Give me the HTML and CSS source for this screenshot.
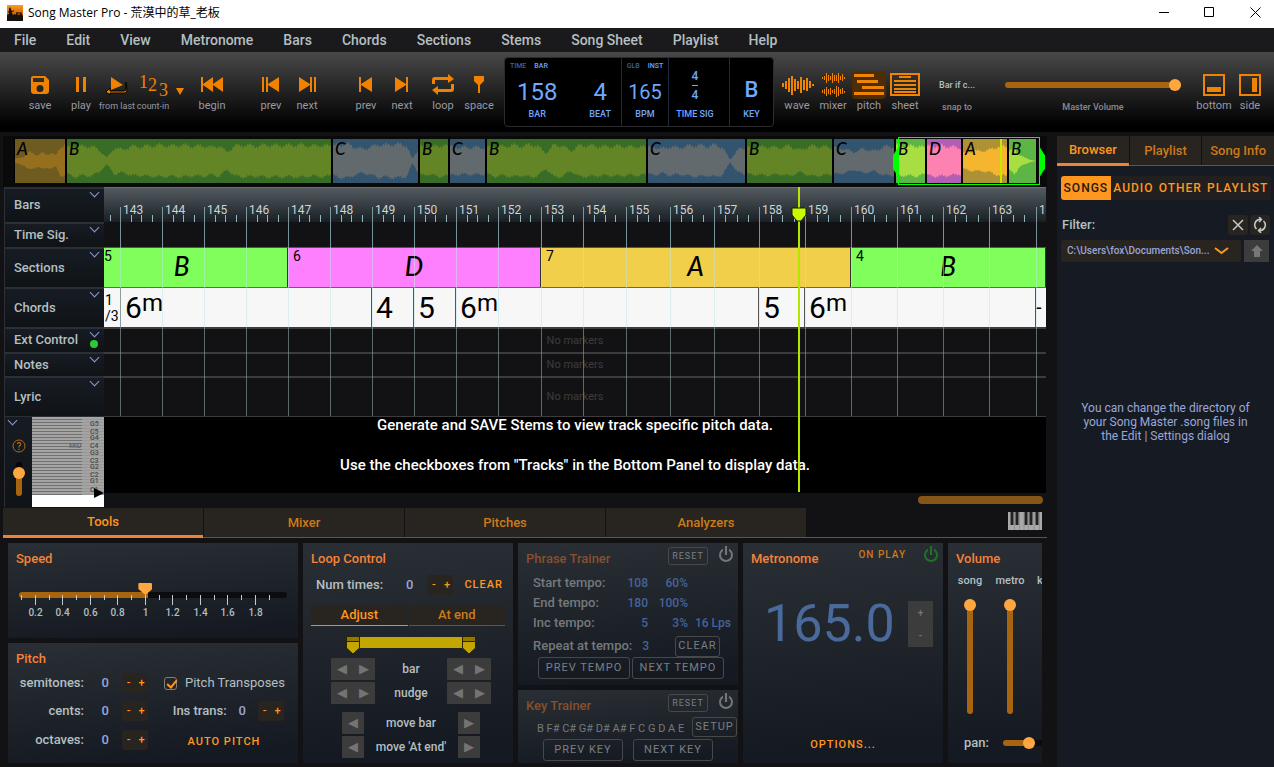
FILE: index.html
```html
<!DOCTYPE html>
<html lang="en">
<head>
    <meta charset="UTF-8">
    <meta name="viewport" content="width=device-width, initial-scale=1.0">
    <title>Song Master Pro</title>
    <link rel="stylesheet" href="styles.css">
</head>
<body>
    <header class="titlebar">
        <svg class="app-icon" viewBox="0 0 16 16">
            <defs><linearGradient id="sunset" x1="0" y1="0" x2="0" y2="1"><stop offset="0" stop-color="#ff9a1f"/><stop offset="1" stop-color="#a33c00"/></linearGradient></defs>
            <rect width="16" height="16" fill="url(#sunset)"/>
            <path d="M0 16V10l2-1 0-5 1-2 1 2 1 4 1 2 2-1 1 1 1-3 1 3 1 0 2-2 2 3v6z" fill="#16110c"/>
            <path d="M1 7l6-1M9 8h6" stroke="#16110c"/>
        </svg>
        <h1>Song Master Pro - 荒漠中的草_老板</h1>
        <div class="window-buttons">
            <button aria-label="Minimize"><svg width="11" height="11" viewBox="0 0 11 11"><path d="M0 5.5h10" stroke="#000"/></svg></button>
            <button aria-label="Maximize"><svg width="11" height="11" viewBox="0 0 11 11"><path d="M.5.5h9v9h-9z" stroke="#000" fill="none"/></svg></button>
            <button aria-label="Close"><svg width="11" height="11" viewBox="0 0 11 11"><path d="M.5.5l10 10M10.500.5l-10 10" stroke="#000"/></svg></button>
        </div>
    </header>
    <nav class="menubar">
        <a href="#">File</a><a href="#">Edit</a><a href="#">View</a><a href="#">Metronome</a><a href="#">Bars</a><a href="#">Chords</a><a href="#">Sections</a><a href="#">Stems</a><a href="#">Song Sheet</a><a href="#">Playlist</a><a href="#">Help</a>
    </nav>

    <div class="toolbar">
        <div class="group">
            <button class="tool"><svg viewBox="0 0 34 28"><path fill-rule="evenodd" d="M10 5h12l4 4v11q0 3-3 3H11q-3 0-3-3V7q0-2 2-2zm0 2v4h11V7zm7 7a3.500 3.500 0 100 7 3.500 3.500 0 000-7z"/></svg>save</button>
        </div>
        <div class="group">
            <button class="tool"><svg viewBox="0 0 34 28"><path d="M12 6h3v15h-3zM19 6h3v15h-3z"/></svg>play</button>
            <button class="tool small"><svg viewBox="0 0 34 28"><path d="M11 6l12 8-12 5z"/><path d="M26 11v7q0 2-2 2H10v-3l-4 4 4 3v-2h15q2 0 2-3z" stroke="#000"/></svg>from last</button>
            <button class="tool small"><svg viewBox="0 0 34 28" class="count"><text x="3" y="17">1</text><text x="12" y="20">2</text><text x="23" y="25">3</text></svg>count-in</button>
            <button class="tool drop" aria-label="Count-in options"><svg viewBox="0 0 18 28"><path d="M5 17h8l-4 7z"/></svg></button>
        </div>
        <div class="group begin">
            <button class="tool"><svg viewBox="0 0 34 28"><path d="M6 6h2v7l10-7v7l10-7v15l-10-7v7L8 14v7H6z"/></svg>begin</button>
        </div>
        <div class="group wide">
            <button class="tool"><svg viewBox="0 0 34 28"><path d="M8 6h2v15H8zM12 6h2v7l11-7v15l-11-7v7h-2z"/></svg>prev</button>
            <button class="tool"><svg viewBox="0 0 34 28"><path d="M26 6h-2v15h2zM22 6h-2v7L9 6v15l11-7v7h2z"/></svg>next</button>
        </div>
        <div class="group wide">
            <button class="tool"><svg viewBox="0 0 34 28"><path d="M10 6h2v7l11-7v15l-11-7v7h-2z"/></svg>prev</button>
            <button class="tool"><svg viewBox="0 0 34 28"><path d="M23 6h-2v7L10 6v15l11-7v7h2z"/></svg>next</button>
        </div>
        <div class="group">
            <button class="tool"><svg viewBox="0 0 34 28"><path d="M6 13V9q0-3 3-3h13V3l6 5-6 4V9H9v4zM28 13v5q0 3-3 3H12v3l-6-5 6-4v3h13v-5z"/></svg>loop</button>
            <button class="tool"><svg viewBox="0 0 34 28"><path d="M12 5h10v5l-4 4v8h-2v-8l-4-4z"/></svg>space</button>
        </div>

        <div class="display">
            <div class="cell position">
                <div class="switch"><span>TIME</span><b>BAR</b></div>
                <div class="pair">
                    <div><output>158</output><small>BAR</small></div>
                    <div><output>4</output><small>BEAT</small></div>
                </div>
            </div>
            <div class="cell bpm">
                <div class="switch"><span>GLB</span><b>INST</b></div>
                <output>165</output><small>BPM</small>
            </div>
            <div class="cell sig">
                <output><span>4</span><span>4</span></output><small>TIME SIG</small>
            </div>
            <div class="cell key">
                <output>B</output><small>KEY</small>
            </div>
        </div>

        <div class="group views">
            <button class="tool"><svg viewBox="0 0 34 28" class="lines"><path d="M3 12v4M6 10v8M9 7v14M12 5v19M15 8v12M18 10v8M21 6v16M24 9v10M27 7v13M30 10v7M33 13v2"/></svg>wave</button>
            <button class="tool"><svg viewBox="0 0 34 28" class="lines thin"><path transform="translate(.5 0)" d="M6 6v2M8 5v4M10 2v10M12 4v6M14 5v4M16 2v10M18 4v6M20 4v6M22 2v10M24 5v4M26 3v7M28 6v2M6 19v3M8 18v5M10 16v9M12 18v5M14 17v7M16 19v3M18 18v5M20 15v11M22 16v9M24 18v5M26 17v6M28 20v2"/></svg>mixer</button>
            <button class="tool active"><svg viewBox="0 0 34 28" class="lines wide"><path d="M2 4.500h20M5 10.500h21M10 16.500h22M2 22.500h30"/></svg>pitch</button>
            <button class="tool"><svg viewBox="0 0 34 28" class="lines"><path d="M3 3h28v21H3zM11 6h12M6 10h22M6 14h22M6 18h22M6 21h22"/></svg>sheet</button>
        </div>
        <div class="snap"><button>Bar if c...</button><span>snap to</span></div>
        <div class="master">
            <input type="range" id="master" class="slider" value="100">
            <label for="master">Master Volume</label>
        </div>
        <div class="group panels">
            <button class="tool"><svg viewBox="0 0 34 28" class="lines wide"><path d="M7 4h20v20H7z"/><path d="M10 18.500h14" class="fat"/></svg>bottom</button>
            <button class="tool"><svg viewBox="0 0 34 28" class="lines wide"><path d="M7 4h20v20H7z"/><path d="M21.500 7v14" class="fat"/></svg>side</button>
        </div>
    </div>

    <div class="workspace">
        <main>
            <div class="overview">
                <div class="song" id="song"></div>
            </div>

            <div class="timeline">
                <div class="track-heads">
                    <div class="head bars"><span>Bars</span><button aria-label="Bars menu"></button></div>
                    <div class="head time"><span>Time Sig.</span><button aria-label="Time signature menu"></button></div>
                    <div class="head sections"><span>Sections</span><button aria-label="Sections menu"></button></div>
                    <div class="head chords"><span>Chords</span><button aria-label="Chords menu"></button></div>
                    <div class="head ext"><span>Ext Control</span><button aria-label="Ext Control menu" class="on"></button></div>
                    <div class="head notes"><span>Notes</span><button aria-label="Notes menu"></button></div>
                    <div class="head lyric"><span>Lyric</span><button aria-label="Lyric menu"></button></div>
                    <div class="head pitch-head">
                        <div class="pitch-tools">
                            <button aria-label="Pitch menu"></button>
                            <svg width="14" height="14" viewBox="0 0 14 14"><circle cx="7" cy="7" r="6" fill="none" stroke="#b06a14"/><text x="7" y="11" text-anchor="middle">?</text></svg>
                            <input type="range" class="slider vertical zoom" value="78" aria-label="Pitch zoom">
                        </div>
                        <svg class="keyboard" viewBox="0 0 72 91" id="keyboard"></svg>
                    </div>
                </div>
                <div class="tracks">
                    <div class="row ruler" id="ruler"></div>
                    <div class="row time"></div>
                    <div class="row sections" id="sections"></div>
                    <div class="row chords" id="chords"></div>
                    <div class="row ext">No markers</div>
                    <div class="row notes">No markers</div>
                    <div class="row lyric">No markers</div>
                    <div class="pitch-view">
                        <p>Generate and SAVE Stems to view track specific pitch data.</p>
                        <p>Use the checkboxes from "Tracks" in the Bottom Panel to display data.</p>
                    </div>
                    <div class="scroll"><div></div></div>
                    <svg class="grid-lines" id="grid" viewBox="0 0 942 229" preserveAspectRatio="none"></svg>
                    <div class="playhead"><svg width="16" height="16" viewBox="0 0 16 16"><path d="M1 1h14v7l-5 6H6L1 8z" fill="#c8fa00" stroke="#1a2000"/></svg></div>
                </div>
            </div>

            <div class="tabs">
                <button class="current">Tools</button><button>Mixer</button><button>Pitches</button><button>Analyzers</button>
                <svg class="piano" viewBox="0 0 34 18" width="34" height="18"><path fill="#a9a9a9" d="M0 0h34v18H0z"/><path d="M4 0v13M9 0v13M18 0v13M23 0v13M29 0v13" stroke="#222" stroke-width="3"/><path d="M6.500 0v18M11.500 0v18M16 0v18M20.500 0v18M26 0v18M31.500 0v18" stroke="#777" stroke-width=".5"/></svg>
            </div>

            <div class="tools">
                <div class="column">
                    <section class="panel speed">
                        <h2>Speed</h2>
                        <input type="range" class="slider" min="0" max="200" value="94" aria-label="Speed">
                        <svg viewBox="0 0 268 36" id="speed-scale"></svg>
                    </section>
                    <section class="panel pitch">
                        <h2>Pitch</h2>
                        <div class="pitch-grid">
                            <div class="left">
                                <span>semitones:</span><output>0</output><div class="step"><button>-</button><button>+</button></div>
                                <span>cents:</span><output>0</output><div class="step"><button>-</button><button>+</button></div>
                                <span>octaves:</span><output>0</output><div class="step"><button>-</button><button>+</button></div>
                            </div>
                            <div class="right">
                                <label class="check"><input type="checkbox" checked>Pitch Transposes</label>
                                <div class="ins"><span>Ins trans:</span><output>0</output><div class="step"><button>-</button><button>+</button></div></div>
                                <button class="text">AUTO PITCH</button>
                            </div>
                        </div>
                    </section>
                </div>

                <section class="panel loop">
                    <h2>Loop Control</h2>
                    <div class="num"><span>Num times:</span><output>0</output><div class="step"><button>-</button><button>+</button></div><button class="text">CLEAR</button></div>
                    <div class="loop-tabs"><button class="current">Adjust</button><button>At end</button></div>
                    <div class="loop-body">
                        <svg width="132" height="19" viewBox="0 0 132 19"><path d="M1 1h130v11H1z" fill="#c4a600"/><g fill="#c4a600" stroke="#2a2400"><path d="M1.500 .5h13V12l-6.500 6-6.500-6zM117.500 .5h13V12l-6.500 6-6.500-6z"/><path d="M1.500.5h13v5h-13zM117.500.5h13v5h-13z" fill="#8f7900"/></g></svg>
                        <div class="move"><div class="duo"><button>◀</button><button>▶</button></div><span>bar</span><div class="duo"><button>◀</button><button>▶</button></div></div>
                        <div class="move"><div class="duo"><button>◀</button><button>▶</button></div><span>nudge</span><div class="duo"><button>◀</button><button>▶</button></div></div>
                        <div class="move single first"><div class="duo"><button>◀</button></div><span>move bar</span><div class="duo"><button>▶</button></div></div>
                        <div class="move single"><div class="duo"><button>◀</button></div><span>move 'At end'</span><div class="duo"><button>▶</button></div></div>
                    </div>
                </section>

                <div class="column">
                    <section class="panel phrase dim">
                        <div class="top"><h2>Phrase Trainer</h2><button class="outline reset">RESET</button><button class="power" aria-label="Phrase trainer on"></button></div>
                        <div class="values">
                            <span>Start tempo:</span><output>108</output><output>60%</output><output></output>
                            <span>End tempo:</span><output>180</output><output>100%</output><output></output>
                            <span>Inc tempo:</span><output>5</output><output>3%</output><output>16 Lps</output>
                        </div>
                        <div class="repeat"><span>Repeat at tempo:</span><output>3</output><button class="outline">CLEAR</button></div>
                        <div class="buttons"><button class="outline">PREV TEMPO</button><button class="outline">NEXT TEMPO</button></div>
                    </section>
                    <section class="panel trainer dim">
                        <div class="top"><h2>Key Trainer</h2><button class="outline reset">RESET</button><button class="power" aria-label="Key trainer on"></button></div>
                        <div class="keys"><span>B F# C# G# D# A# F C G D A E</span><button class="outline">SETUP</button></div>
                        <div class="buttons"><button class="outline">PREV KEY</button><button class="outline">NEXT KEY</button></div>
                    </section>
                </div>

                <section class="panel metronome">
                    <div class="top"><h2>Metronome</h2><button class="text">ON PLAY</button><button class="power" aria-label="Metronome on"></button></div>
                    <div class="tempo"><output>165.0</output><div><button>+</button><button>-</button></div></div>
                    <button class="text options">OPTIONS...</button>
                </section>

                <section class="panel volume">
                    <h2>Volume</h2>
                    <div class="faders">
                        <label>song<input type="range" class="slider vertical" value="100"></label>
                        <label>metro<input type="range" class="slider vertical" value="100"></label>
                        <label>key</label>
                    </div>
                    <label class="pan">pan:<input type="range" class="slider" value="50"></label>
                </section>
            </div>
        </main>

        <aside>
            <div class="side-tabs"><button class="current">Browser</button><button>Playlist</button><button>Song Info</button></div>
            <div class="kinds"><button class="current">SONGS</button><button>AUDIO</button><button>OTHER</button><button>PLAYLIST</button></div>
            <div class="filter">
                <span>Filter:</span>
                <button aria-label="Clear filter"><svg width="12" height="12" viewBox="0 0 12 12"><path d="M1 1l10 10M11 1L1 11"/></svg></button>
                <button aria-label="Refresh"><svg width="16" height="16" viewBox="0 0 16 16"><path d="M4.500 12A5.500 5.500 0 017 2.600h2M7 0l2.500 2.600L7 5M11.500 4A5.500 5.500 0 019 13.400H7M9 16l-2.500-2.600L9 11"/></svg></button>
            </div>
            <div class="folder">
                <select aria-label="Folder"><option>C:\Users\fox\Documents\Son...</option></select>
                <button aria-label="Up one folder"><svg width="12" height="12" viewBox="0 0 12 12"><path d="M6 0l6 6H9v6H3V6H0z" fill="#777"/></svg></button>
            </div>
            <p>You can change the directory of your Song Master .song files in the Edit | Settings dialog</p>
        </aside>
    </div>
    <script src="script.js"></script>
</body>
</html>
```
FILE: styles.css
```css
:root {
    --bg: #121214;
    --orange: #ff961e;
    --orange-dim: #cc7a1a;
    --title: #f58238;
    --label: #b4bfc1;
    --value: #9aa6d8;
    --tab: #282420;
    --blue: #6ea8ff;
}
* {
    box-sizing: border-box;
}
body {
    margin: 0;
    min-height: 100vh;
    display: flex;
    flex-direction: column;
    background: var(--bg);
    color: var(--label);
    font: 500 13px/16px Roboto, "Noto Sans CJK TC", sans-serif;
    overflow-x: hidden;
}
button {
    margin: 0;
    padding: 0;
    border: 0;
    background: none;
    color: inherit;
    font: inherit;
    white-space: nowrap;
}
h1, h2, p {
    margin: 0;
}
svg {
    display: block;
    flex: none;
}
small {
    font-size: 9px;
    line-height: 12px;
}

/* Title and menu */
.titlebar {
    height: 28px;
    display: flex;
    align-items: center;
    padding: 0 1px 3px 7px;
    background: #fff;
    color: #000;
}
.titlebar h1 {
    margin-left: 5px;
    font: 400 12px/16px "Open Sans", "Noto Sans CJK TC", sans-serif;
}
.app-icon {
    width: 16px;
    height: 16px;
}
.window-buttons {
    margin-left: auto;
    display: flex;
}
.window-buttons button {
    width: 45px;
    height: 25px;
    display: grid;
    place-items: center;
}
.window-buttons button:last-child {
    width: 36px;
    margin-left: 5px;
}
.menubar {
    height: 24px;
    display: flex;
    align-items: center;
    gap: 30px;
    padding-left: 14px;
    background: #1a1a1c;
    font-size: 14px;
}
.menubar a {
    color: var(--label);
    text-decoration: none;
}

/* Toolbar */
.toolbar {
    height: 80px;
    display: flex;
    padding: 0 6px 0 22px;
    background: linear-gradient(#494949, #000 92%);
}
.group {
    display: flex;
    flex: none;
    margin-right: 5px;
}
.group.begin {
    margin-right: 0;
}
.group.wide {
    margin-left: 23px;
    margin-right: 0;
}
.group.wide + .group:not(.wide) {
    margin-left: 5px;
    margin-right: 7px;
}
.tool {
    width: 36px;
    padding-top: 19px;
    display: flex;
    flex-direction: column;
    align-items: center;
    font-size: 11px;
    font-weight: 400;
    line-height: 14px;
    color: #9a99a4;
}
.tool.small {
    font-size: 9px;
}
.tool svg {
    width: 34px;
    height: 28px;
    fill: #f08200;
}
.tool.drop {
    width: 18px;
}
.tool.drop svg {
    width: 18px;
}
.tool .count {
    font: 18px "Liberation Serif", serif;
}
.tool .lines {
    fill: none;
    stroke: #ee8405;
    stroke-width: 2;
}
.tool .lines.thin {
    stroke-width: 1;
}
.tool .lines .fat {
    stroke-width: 5;
}
.tool.active svg {
    background: #4e2c05;
    border-radius: 4px;
    stroke-width: 3;
}
.display {
    width: 270px;
    height: 70px;
    flex: none;
    margin: 5px 5px 0 0;
    display: flex;
    background: #000;
    border: 1px solid #2c2c2e;
    border-radius: 4px;
    color: var(--blue);
}
.cell {
    display: flex;
    flex-direction: column;
    justify-content: flex-end;
    align-items: center;
    padding-bottom: 6px;
    border-left: 1px solid #1c2a40;
}
.cell small {
    margin-top: 4px;
}
.cell output {
    color: inherit;
    font-weight: 400;
    font-size: 24px;
    line-height: 24px;
}
.cell.position {
    width: 116px;
    border: 0;
}
.cell.bpm {
    width: 47px;
}
.cell.bpm output {
    font-size: 20px;
}
.cell.sig {
    width: 61px;
    padding-right: 8px;
}
.cell.key {
    width: 44px;
}
.cell.key output {
    font-size: 22px;
    font-weight: 500;
    line-height: 28px;
}
.cell.sig output {
    display: flex;
    flex-direction: column;
    font-size: 12px;
    font-weight: 500;
    line-height: 18px;
}
.cell.sig output span + span {
    border-top: 1px solid var(--blue);
}
.pair {
    width: 100%;
    display: flex;
    justify-content: space-between;
    padding: 0 10px 0 12px;
}
.pair div {
    display: flex;
    flex-direction: column;
    align-items: center;
}
.switch {
    display: flex;
    gap: 8px;
    margin-bottom: auto;
    padding-top: 3px;
    font-size: 7px;
    line-height: 10px;
}
.position .switch {
    align-self: flex-start;
    padding-left: 5px;
}
.switch span {
    color: #42618f;
}
.switch b {
    font-weight: 500;
}
.snap {
    width: 36px;
    margin-left: 11px;
    padding-top: 24px;
    display: flex;
    flex-direction: column;
    align-items: center;
    font-size: 9px;
    color: #8b8a94;
}
.snap button {
    margin-bottom: 4px;
    line-height: 18px;
    color: #b4c2c4;
}
.snap span {
    line-height: 18px;
}
.master {
    flex: 1;
    padding: 24px 15px 0 30px;
    display: flex;
    flex-direction: column;
    align-items: center;
    font-size: 9px;
    color: #8b8a94;
}
.master label {
    margin-top: 5px;
}
.group.panels {
    margin-right: 0;
}

/* Sliders */
.slider {
    appearance: none;
    width: 100%;
    height: 18px;
    margin: 0;
    background: none;
}
.slider::-webkit-slider-runnable-track {
    height: 6px;
    border-radius: 3px;
    background: #a9640f;
}
.slider::-webkit-slider-thumb {
    appearance: none;
    width: 12px;
    height: 12px;
    margin-top: -3px;
    border-radius: 50%;
    background: #ffa63f;
}
.slider.vertical {
    writing-mode: vertical-lr;
    direction: rtl;
    width: 12px;
    height: 115px;
}
.slider.vertical::-webkit-slider-runnable-track {
    width: 6px;
    height: 100%;
}
.slider.vertical::-webkit-slider-thumb {
    margin: 0 0 0 -3px;
}

/* Workspace */
.workspace {
    flex: 1;
    display: flex;
    gap: 10px;
    padding-top: 4px;
}
main {
    flex: 1;
    min-width: 0;
}
.overview {
    margin-left: 3px;
    padding: 3px 10px 4px 11px;
    background: #0a0a0a;
}
.song {
    position: relative;
    height: 44px;
    display: grid;
}
.segment {
    position: relative;
    border-right: 1px solid #000;
    border-left: 1px solid #000;
    background: var(--back);
}
.segment svg {
    width: 100%;
    height: 100%;
    fill: var(--wave);
}
.segment b {
    position: absolute;
    left: 2px;
    top: 0;
    line-height: 20px;
}
.segment b, .section b {
    color: #000;
    font-family: Lato, sans-serif;
    font-style: italic;
    font-weight: 500;
    font-size: 17px;
}
.seg-A { --back: #6e5b20; --wave: #966f1e; }
.seg-B { --back: #376d26; --wave: #648526; }
.seg-C { --back: #33546f; --wave: #626a6d; }
.lit.seg-A { --back: #ad9235; --wave: #f5b52f; }
.lit.seg-B { --back: #5cb544; --wave: #a8de41; }
.lit.seg-D { --back: #b35eb5; --wave: #fd82b2; }
.selection {
    position: absolute;
    top: -2px;
    bottom: -2px;
    left: 86.4%;
    width: 13.9%;
    border: 1px solid #0f0;
}
.selection::before, .selection::after {
    content: "";
    position: absolute;
    top: 8px;
    width: 6px;
    height: 32px;
    background: #0f0;
}
.selection::before {
    right: 100%;
    clip-path: polygon(100% 0, 100% 100%, 0 70%, 0 30%);
}
.selection::after {
    left: 100%;
    clip-path: polygon(0 0, 0 100%, 100% 70%, 100% 30%);
}
.now {
    position: absolute;
    top: 0;
    bottom: 0;
    left: 96.4%;
    width: 2px;
    background: #c8e800;
}

/* Timeline */
.timeline {
    display: flex;
    margin: 0 1px 0 4px;
}
.track-heads {
    width: 100px;
    flex: none;
}
.head {
    display: flex;
    align-items: center;
    padding: 0 0 1px 9px;
    border: 1px solid #2b3036;
    border-width: 2px 0 0 1px;
    background: linear-gradient(#171c24, #0f1316);
}
.head > button {
    align-self: flex-start;
    margin-left: auto;
    margin-right: 6px;
}
.head button {
    width: 8px;
    height: 9px;
    position: relative;
}
.head button::before {
    content: "";
    position: absolute;
    left: 1px;
    top: 0;
    width: 6px;
    height: 6px;
    border: solid #8c9bd0;
    border-width: 0 1px 1px 0;
    transform: rotate(45deg);
}
.head .on::after {
    content: "";
    position: absolute;
    left: 0;
    top: 11px;
    width: 8px;
    height: 8px;
    border-radius: 50%;
    background: #2bcb35;
}
.bars, .ruler { height: 35px; }
.time, .ext { height: 25px; }
.sections, .chords, .lyric { height: 40px; }
.notes { height: 24px; }
.head.pitch-head {
    height: 91px;
    padding: 0;
    align-items: stretch;
    border-width: 1px 0 0 1px;
    overflow: hidden;
}
.pitch-tools {
    width: 27px;
    display: flex;
    flex-direction: column;
    align-items: center;
}
.pitch-tools button {
    align-self: flex-start;
    margin: 0 0 13px 3px;
}
.pitch-tools text {
    font-size: 10px;
    fill: #b06a14;
}
.keyboard {
    width: 72px;
    height: 91px;
    font-size: 7px;
}
.slider.zoom {
    height: 34px;
    margin-top: 9px;
}
.slider.zoom::-webkit-slider-runnable-track {
    background: linear-gradient(#050505 30%, #a9640f 30%);
}
.tracks {
    position: relative;
    flex: 1;
    min-width: 0;
}
.row {
    display: grid;
    color: #3d3d3d;
    font-size: 11px;
    font-weight: 400;
    place-items: center;
    border-top: 2px solid #3c3c3c;
}
.row.time {
    border: 0;
}
.row.ruler, .row.sections, .row.chords {
    place-items: stretch;
}
.row.ruler {
    border-top: 1px solid #687078;
    background: linear-gradient(#535a60, #182025);
}
.ruler span {
    overflow: hidden;
    padding: 14px 0 0 3px;
    color: #ccd4d6;
    font-size: 12px;
    font-weight: 400;
}
.row.sections {
    border-top: 1px solid #555;
}
.section {
    display: grid;
    place-items: center;
    position: relative;
    border-right: 1px solid #333;
    color: #000;
}
.section b {
    font-size: 26px;
    line-height: 30px;
    margin-bottom: 4px;
}
.section span {
    position: absolute;
    left: 5px;
    top: 0;
    font-size: 14px;
}
.section:first-child span {
    left: 0;
}
.section:first-child b {
    margin-right: 28px;
}
.sec-B { background: #80ff5c; }
.sec-D { background: #ff80ff; }
.sec-A { background: #f2cf4a; }
.row.chords {
    border-top: 1px solid #666;
}
.chord {
    overflow: hidden;
    padding-left: 4px;
    border-right: 1px solid #555;
    background: #f7f7f7;
    color: #000;
    font-size: 30px;
    line-height: 39px;
}
.chord sup {
    font-size: 24px;
    line-height: 0;
    vertical-align: 7px;
}
.chord.slash {
    padding: 4px 0 0 1px;
    font-size: 14px;
    line-height: 16px;
}
.chord:last-child {
    padding: 0;
    font-size: 20px;
    border: 0;
}
.pitch-view {
    height: 77px;
    border-top: 1px solid #3c3c3c;
    background: #000;
    color: #fff;
    font-size: 15px;
    line-height: 16px;
    text-align: center;
}
.pitch-view p {
    margin-bottom: 24px;
}
.scroll {
    height: 14px;
    padding: 3px 3px 0;
}
.scroll div {
    width: 125px;
    height: 8px;
    margin-left: auto;
    border-radius: 4px;
    background: #875517;
}
.grid-lines {
    position: absolute;
    left: 0;
    top: 0;
    width: 100%;
    height: 229px;
    pointer-events: none;
}
.playhead {
    position: absolute;
    left: 73.8%;
    top: 0;
    width: 2px;
    height: 305px;
    margin-left: -1px;
    background: #b4e600;
}
.playhead svg {
    margin: 20px 0 0 -7px;
}

/* Bottom tabs */
.tabs {
    height: 30px;
    margin: 1px 0 0 3px;
    display: flex;
    border-bottom: 1px solid #55585a;
}
.tabs button {
    width: 200px;
    margin-right: 1px;
    background: var(--tab);
    color: var(--orange-dim);
}
.tabs button.current, .side-tabs button.current {
    margin-bottom: -1px;
    border-bottom: 3px solid #ee8236;
    color: var(--orange);
}
.piano {
    margin: 4px 5px 0 auto;
}

/* Tool panels */
.tools {
    display: grid;
    grid-template-columns: 290px 210px 220px 200px minmax(0, 1fr);
    gap: 5px;
    padding: 5px 5px 4px 8px;
}
.column {
    display: flex;
    flex-direction: column;
    gap: 5px;
}
.panel {
    padding: 8px;
    background: linear-gradient(175deg, #2a2f35, #151a22 90%);
}
h2 {
    color: var(--title);
    font-size: 13px;
    line-height: 16px;
    font-weight: 500;
}
output {
    color: var(--value);
}
.text {
    color: var(--orange);
    font-size: 11px;
    letter-spacing: 1px;
}
.step {
    display: flex;
    width: 26px;
    height: 20px;
    border-radius: 3px;
    background: var(--tab);
    color: var(--orange);
    font-size: 11px;
}
.step button {
    flex: 1;
}
.speed {
    height: 95px;
    padding-bottom: 0;
}
.speed .slider {
    display: block;
    width: 268px;
    margin: 19px 0 0 3px;
}
.speed .slider::-webkit-slider-runnable-track {
    background: linear-gradient(90deg, #a9640f 48%, #0a0c0e 48%);
}
.speed .slider::-webkit-slider-thumb {
    width: 14px;
    margin-top: -9px;
    border-radius: 1px;
    clip-path: polygon(0 0, 100% 0, 100% 50%, 50% 100%, 0 50%);
}
.speed svg {
    position: relative;
    width: 268px;
    height: 36px;
    margin: -11px 0 0 2px;
    fill: var(--label);
    font-size: 10px;
    pointer-events: none;
}
.panel.pitch {
    height: 120px;
}
.pitch-grid {
    display: flex;
    gap: 16px;
    margin-top: 6px;
}
.left {
    display: grid;
    grid-template-columns: 68px 12px 26px;
    column-gap: 13px;
    row-gap: 8px;
    align-items: center;
    text-align: right;
}
.left .step {
    text-align: center;
}
.right {
    width: 120px;
    display: flex;
    flex-direction: column;
    gap: 8px;
    align-items: center;
}
.check {
    height: 20px;
    align-self: flex-start;
    display: flex;
    align-items: center;
    gap: 8px;
    font-weight: 400;
    white-space: nowrap;
}
.check input {
    appearance: none;
    position: relative;
    width: 13px;
    height: 13px;
    margin: 0;
    border: 1px solid #7b7f82;
    border-radius: 3px;
    background: var(--tab);
}
.check input:checked::before {
    content: "";
    position: absolute;
    left: 4px;
    top: 0;
    width: 4px;
    height: 8px;
    border: solid var(--orange);
    border-width: 0 2px 2px 0;
    transform: rotate(40deg);
}
.ins {
    align-self: flex-end;
    display: flex;
    align-items: center;
    gap: 12px;
}
.right .text {
    margin-top: 5px;
}
.num {
    display: flex;
    align-items: center;
    height: 20px;
    margin-top: 8px;
    padding-left: 5px;
}
.num output {
    margin: 0 14px 0 auto;
}
.num .text {
    margin: 0 2px 0 11px;
}
.loop.panel {
    padding-bottom: 4px;
}
.loop-tabs {
    height: 21px;
    margin-top: 10px;
    display: flex;
    gap: 1px;
}
.loop-tabs button {
    flex: 1;
    background: var(--tab);
    color: var(--orange-dim);
    border-bottom: 1px solid #55585a;
}
.loop-tabs .current {
    color: var(--orange);
    border-color: #ee8236;
}
.loop-body {
    display: flex;
    flex-direction: column;
    align-items: center;
    gap: 2px;
    padding: 10px 0 0 6px;
}
.loop-body > svg {
    margin-bottom: 1px;
}
.move {
    width: 160px;
    display: flex;
    justify-content: space-between;
    align-items: center;
}
.move.single {
    width: 138px;
}
.move.first {
    margin-top: 6px;
}
.move span {
    margin: 0 -10px;
    white-space: nowrap;
    font-size: 12px;
}
.duo {
    display: flex;
    background: #3c3c3c;
    border-radius: 1px;
    color: #747474;
    font: 13px/22px "DejaVu Sans", sans-serif;
}
.duo button {
    width: 22px;
    height: 22px;
}
.top {
    display: flex;
    height: 16px;
}
.reset {
    width: 40px;
    height: 18px;
    margin: -4px 11px 0 auto;
}
.outline {
    border: 1px solid #484848;
    border-radius: 3px;
    color: #7a7f81;
    font-size: 11px;
    font-weight: 400;
    letter-spacing: 1px;
}
.outline.reset {
    font-size: 9px;
}
.power {
    position: relative;
    width: 14px;
    height: 14px;
    margin: -3px -3px 0 0;
    border: 2px solid #74777a;
    border-radius: 50%;
}
.power::before {
    content: "";
    position: absolute;
    left: 2px;
    top: -4px;
    width: 6px;
    height: 9px;
    background: linear-gradient(90deg, #292e34 2px, #74777a 2px, #74777a 4px, #292e34 4px);
}
.dim {
    color: #74797c;
}
.dim h2 {
    color: #87502e;
}
.dim output {
    color: #45639a;
    font-size: 12px;
}
.phrase {
    height: 142px;
}
.values {
    display: grid;
    grid-template-columns: 76px 39px 40px 43px;
    row-gap: 4px;
    margin: 8px 0 0 7px;
    text-align: right;
    white-space: nowrap;
}
.values span {
    text-align: left;
}
.repeat {
    display: flex;
    align-items: center;
    height: 22px;
    margin: 4px 10px 0 7px;
}
.repeat output {
    margin-left: 10px;
}
.repeat .outline {
    width: 45px;
    height: 21px;
    margin-left: auto;
}
.buttons {
    display: flex;
    justify-content: center;
    gap: 2px;
}
.phrase .buttons {
    padding-left: 6px;
}
.buttons .outline {
    width: 92px;
    height: 22px;
}
.trainer {
    height: 73px;
}
.trainer .buttons {
    gap: 10px;
    margin-top: 2px;
}
.trainer .buttons .outline {
    width: 80px;
}
.keys {
    display: flex;
    justify-content: space-between;
    align-items: flex-end;
    height: 20px;
    margin: 3px -7px 0 11px;
    font-size: 11px;
    font-weight: 400;
    white-space: nowrap;
}
.keys .outline {
    width: 45px;
    height: 20px;
}
.metronome {
    display: flex;
    flex-direction: column;
}
.metronome .top .text {
    height: 8px;
    margin: 0 18px 0 auto;
    color: var(--orange-dim);
    font-size: 10px;
    line-height: 8px;
}
.metronome .power {
    border-color: #1f7326;
}
.metronome .power::before {
    background: linear-gradient(90deg, #292e34 2px, #1f7326 2px, #1f7326 4px, #292e34 4px);
}
.tempo {
    display: flex;
    align-items: center;
    justify-content: space-between;
    margin: 33px 2px 0 13px;
}
.tempo output {
    color: #4b6a9c;
    font: 400 52px/48px Roboto, sans-serif;
}
.tempo div {
    display: flex;
    flex-direction: column;
    background: #3c3c3c;
    color: #777;
    font-size: 10px;
}
.tempo button {
    width: 25px;
    height: 23px;
}
.metronome .options {
    margin: auto auto 2px;
}
.volume {
    overflow: hidden;
    display: flex;
    flex-direction: column;
}
.faders {
    display: flex;
    margin: 6px 0 0 -6px;
}
.faders label {
    width: 40px;
    flex: none;
    display: flex;
    flex-direction: column;
    align-items: center;
    gap: 10px;
    font-size: 11px;
}
.faders label:last-child {
    align-items: flex-start;
    padding-left: 7px;
}
.pan {
    display: flex;
    align-items: center;
    gap: 14px;
    margin: auto -8px 3px 8px;
}
.pan .slider {
    width: 52px;
    flex: none;
}
.pan .slider::-webkit-slider-runnable-track {
    background: linear-gradient(90deg, #a9640f 50%, #0a0c0e 50%);
}

/* Side panel */
aside {
    width: 217px;
    flex: none;
    background: #161b23;
}
.side-tabs {
    height: 30px;
    display: flex;
    gap: 1px;
    background: #101114;
    border-bottom: 1px solid #55585a;
}
.side-tabs button {
    flex: 1;
    background: var(--tab);
    color: var(--orange-dim);
}
.kinds {
    display: flex;
    height: 24px;
    margin: 10px 3px 0 4px;
    border-radius: 3px;
    background: #22201f;
    color: var(--orange);
    font-size: 12px;
    overflow: hidden;
}
.kinds button {
    flex: auto;
    letter-spacing: 1px;
}
.kinds .current {
    background: var(--orange);
    color: #1d1a16;
}
.filter {
    display: flex;
    align-items: center;
    gap: 2px;
    margin: 15px 4px 0 5px;
}
.filter span {
    margin-right: auto;
}
.filter button {
    width: 20px;
    height: 20px;
    display: grid;
    place-items: center;
    border-radius: 3px;
    background: var(--tab);
}
.filter path {
    fill: none;
    stroke: #c4cbcc;
    stroke-width: 1.5;
}
.folder {
    display: flex;
    gap: 3px;
    margin: 5px 5px 0 4px;
}
.folder select {
    appearance: none;
    flex: 1;
    min-width: 0;
    height: 22px;
    padding: 0 30px 0 6px;
    border: 0;
    border-radius: 3px;
    background: var(--tab) url("data:image/svg+xml,%3Csvg xmlns='http://www.w3.org/2000/svg' width='15' height='8'%3E%3Cpath d='M1 1l6.500 5 6.500-5' fill='none' stroke='%23ff961e' stroke-width='2'/%3E%3C/svg%3E") no-repeat right 12px center;
    color: var(--value);
    font: 500 10px/22px Roboto, sans-serif;
}
.folder button {
    width: 25px;
    display: grid;
    place-items: center;
    background: #3c3c3c;
}
aside p {
    width: 176px;
    margin: 139px auto 0;
    color: var(--value);
    font-size: 12px;
    font-weight: 400;
    line-height: 14px;
    text-align: center;
}
```
FILE: script.js
```js
const TRACK_START = 104;
const TRACK_END = 1046;

const barLines = [120, 162, 204, 246, 288, 330, 372, 414, 456, 498, 541, 583, 626, 670, 714, 759, 805, 851, 897, 943, 989, 1036];

const sections = [
    { end: 288, number: 5, name: 'B' },
    { end: 541, number: 6, name: 'D' },
    { end: 851, number: 7, name: 'A' },
    { end: 1046, number: 4, name: 'B' }
];

const chords = [
    { end: 121, html: '1<br>/3', cls: 'slash' },
    { end: 372, html: '6<sup>m</sup>' },
    { end: 414, html: '4' },
    { end: 456, html: '5' },
    { end: 759, html: '6<sup>m</sup>' },
    { end: 805, html: '5' },
    { end: 1036, html: '6<sup>m</sup>' },
    { end: 1046, html: '-' }
];

// level: loudness points spread evenly over the segment
const song = [
    { end: 66, name: 'A', level: [.1, .15, .2, .4, .35, .25, .38, .3, .35, .25, .65, .7] },
    { end: 332, name: 'B', level: [.6, .72, .65, .68, .5, .15, .62, .5, .66, .65, .68, .7, .72, .68, .72, .7, .66, .7, .62, .7, .4, .68, .72, .7, .68, .74, .7, .72, .7, .74, .7, .68, .72, .66] },
    { end: 419, name: 'C', level: [.65, .75, .75, .75, .6, .55, .58, .65, .75, .7, .75, .75, .75, .7, .1, .5] },
    { end: 449, name: 'B', level: [.65, .6, .7, .68] },
    { end: 486, name: 'C', level: [.65, .6, .62, .6] },
    { end: 647, name: 'B', level: [.6, .7, .65, .72, .66, .72, .7, .35, .72, .7, .45, .7, .7, .68, .65, .66, .68, .64, .66, .62] },
    { end: 746, name: 'C', level: [.6, .62, .55, .65, .6, .65, .7, .7, .66, .72, .62, .05, .5, .6] },
    { end: 833, name: 'B', level: [.6, .62, .65, .6, .68, .5, .68, .66, .6] },
    { end: 895, name: 'C', level: [.6, .55, .4, .55, .45, .65, .65] },
    { end: 926, name: 'B', lit: true, level: [.7, .65, .7, .6] },
    { end: 962, name: 'D', lit: true, level: [.65, .7, .65, .6] },
    { end: 1008, name: 'A', lit: true, level: [.35, .45, .45, .5, .65, .65] },
    { end: 1037, name: 'B', lit: true, level: [.4, .6, .25, .15, .05, 0] }
];

function columns(start, items) {
    let from = start;
    return items.map(item => {
        const width = item.end - from;
        from = item.end;
        return `minmax(0, ${width}fr)`;
    }).join(' ');
}

function wave(level, width) {
    let top = '';
    let bottom = '';
    for (let x = 0; x <= width; x++) {
        const at = x / width * (level.length - 1);
        const i = Math.min(Math.floor(at), level.length - 2);
        const base = level[i] + (level[i + 1] - level[i]) * (at - i);
        const jitter = Math.sin(x * 1.3) * Math.sin(x * 7.1 + 1) * .18 * Math.min(1, base * 1.2);
        top += `L${x} ${(22 - (base + jitter) * 22).toFixed(1)}`;
        bottom = `L${x} ${(22 + (base - jitter * .7) * 22).toFixed(1)}` + bottom;
    }
    return `<svg viewBox="0 0 ${width} 44" preserveAspectRatio="none"><path d="M0 22${top}${bottom}z"/></svg>`;
}

// Song overview
const songEl = document.getElementById('song');
let from = 14;
songEl.style.gridTemplateColumns = columns(14, song);
songEl.innerHTML = song.map(s => {
    const html = `<div class="segment seg-${s.name}${s.lit ? ' lit' : ''}">${wave(s.level, s.end - from)}<b>${s.name}</b></div>`;
    from = s.end;
    return html;
}).join('') + '<div class="selection"></div><div class="now"></div>';

// Ruler numbers, section and chord blocks
const bars = [...barLines, TRACK_END].map(end => ({ end }));
const ruler = document.getElementById('ruler');
ruler.style.gridTemplateColumns = columns(TRACK_START, bars);
ruler.innerHTML = bars.map((b, i) => `<span>${i ? 142 + i : ''}</span>`).join('');

const sectionsEl = document.getElementById('sections');
sectionsEl.style.gridTemplateColumns = columns(TRACK_START, sections);
sectionsEl.innerHTML = sections.map(s => `<div class="section sec-${s.name}"><span>${s.number}</span><b>${s.name}</b></div>`).join('');

const chordsEl = document.getElementById('chords');
chordsEl.style.gridTemplateColumns = columns(TRACK_START, chords);
chordsEl.innerHTML = chords.map(c => `<div class="chord ${c.cls || ''}">${c.html}</div>`).join('');

// Bar lines and beat ticks
let lines = '<path stroke="#8fb9bd" d="M6.500 28v6';
barLines.forEach((x, i) => {
    const next = barLines[i + 1] || x + 46;
    for (let beat = 1; beat < 4; beat++) {
        lines += `M${Math.round(x + (next - x) * beat / 4) - TRACK_START + .5} 28v7`;
    }
});
lines += '"/>';
barLines.forEach(x => {
    const at = x - TRACK_START + .5;
    lines += `<path stroke="#91b3b8" stroke-opacity=".8" d="M${at} 20v40"/>`;
    lines += `<path stroke="#bfe6ea" stroke-opacity=".5" d="M${at} 60v80"/>`;
    lines += `<path stroke="#8aa5a9" stroke-opacity=".6" d="M${at} 140v89"/>`;
});
document.getElementById('grid').innerHTML = lines;

// Speed scale
let scale = '';
for (let i = 1; i <= 19; i++) {
    const x = Math.round(3 + (i - 1) * 13.75) + .5;
    scale += `<path stroke="#c3cccd" d="M${x} 2v${i % 2 ? 5 : 10}"/>`;
    if (i % 2 === 0) {
        scale += `<text x="${x}" y="23" text-anchor="middle">${i / 10}</text>`;
    }
}
document.getElementById('speed-scale').innerHTML = scale;

// Side keyboard of the pitch track
let keys = '<path fill="#a4a4a4" d="M0 0h72v78H0z"/><path fill="#fff" d="M0 78h72v13H0z"/>';
for (let y = 2; y < 78; y += 3) {
    keys += `<path stroke="#707070" d="M0 ${y + .5}h50"/><path stroke="#8a8a8a" stroke-opacity=".5" d="M50 ${y + .5}h22"/>`;
}
const notes = [['G5', 9], ['C5', 17], ['G4', 23], ['C4', 31], ['G3', 38], ['C3', 46], ['G2', 52], ['C2', 60], ['G1', 66], ['C1', 75]];
notes.forEach(([name, y]) => {
    keys += `<text x="58" y="${y}" fill="#4a4a4a">${name}</text>`;
});
keys += '<text x="37" y="31" fill="#666">MID</text><path d="M62 71l10 5-10 5z"/>';
document.getElementById('keyboard').innerHTML = keys;
```
